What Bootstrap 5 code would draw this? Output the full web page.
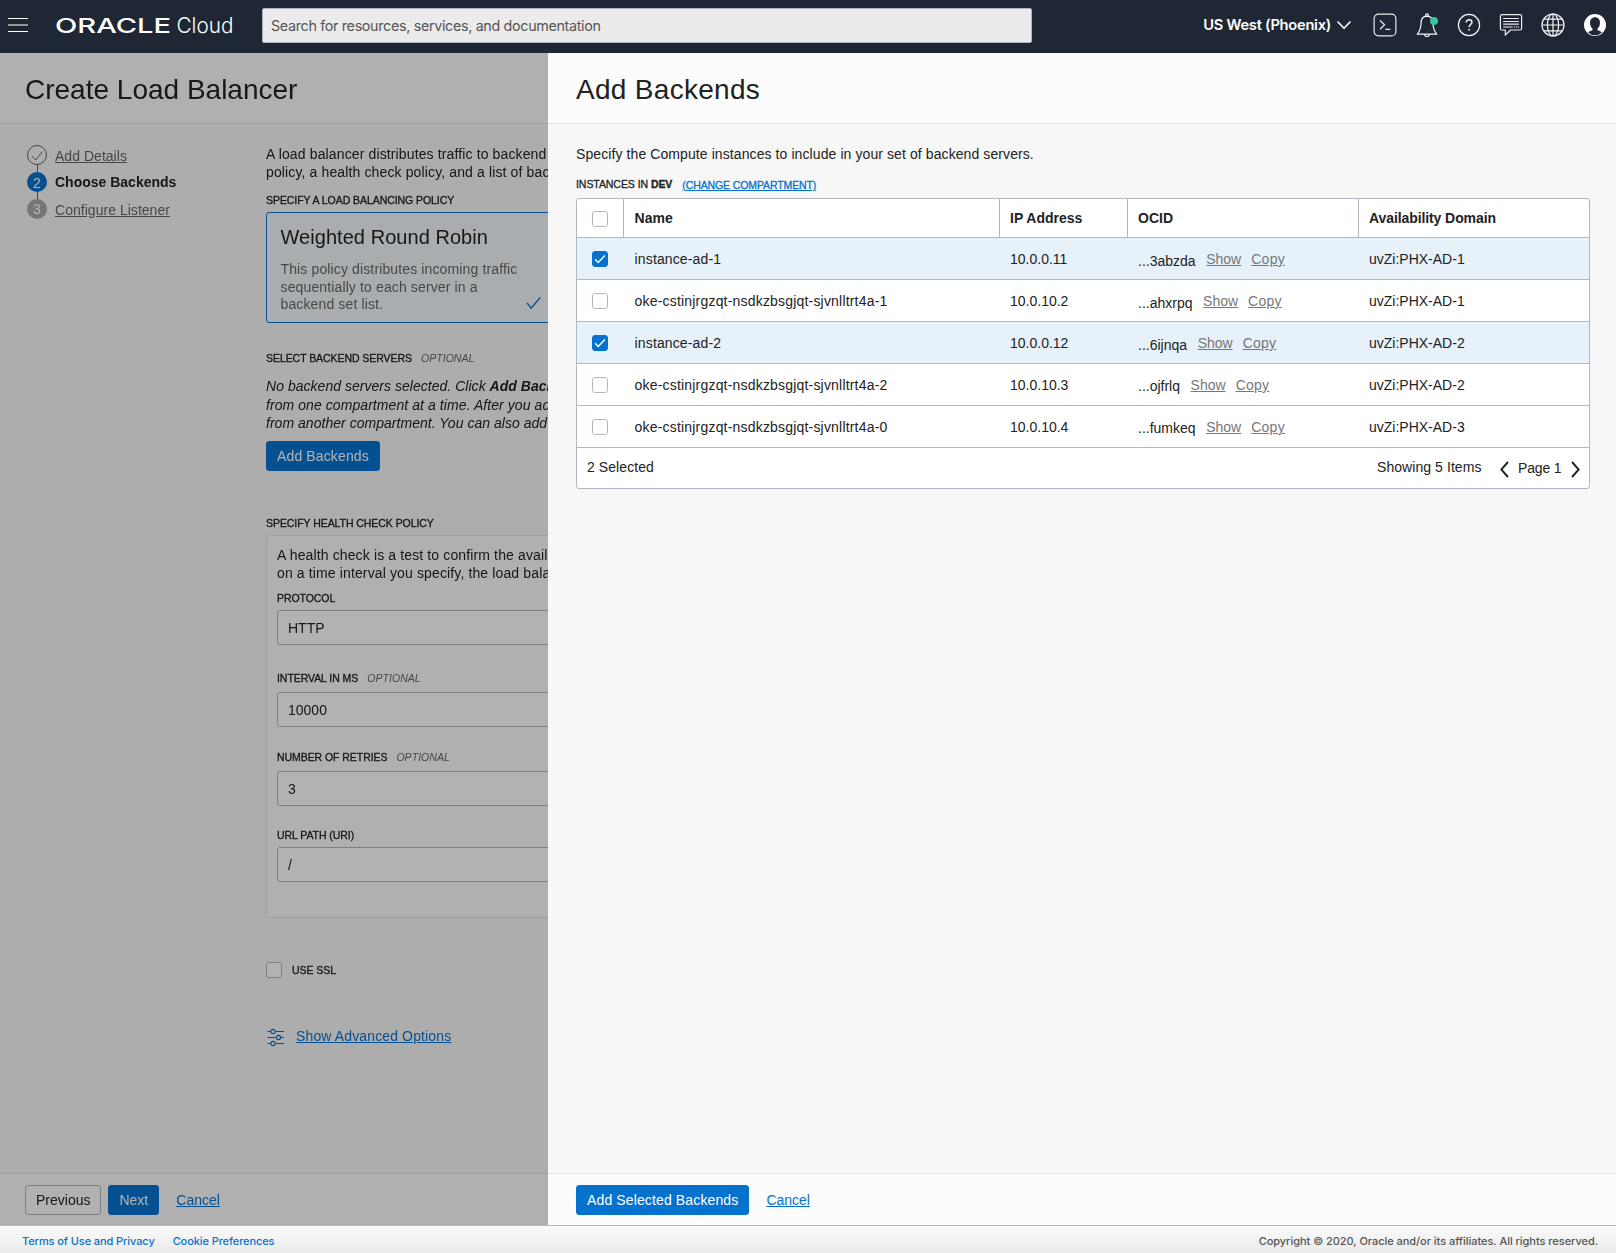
<!DOCTYPE html>
<html lang="en">
<head>
<meta charset="utf-8">
<meta name="viewport" content="width=device-width, initial-scale=1">
<title>Create Load Balancer</title>
<link href="https://cdn.jsdelivr.net/npm/bootstrap@5.3.0/dist/css/bootstrap.min.css" rel="stylesheet">
<script src="https://cdn.jsdelivr.net/npm/bootstrap@5.3.0/dist/js/bootstrap.bundle.min.js" defer></script>
<style>
:root{--blue:#0572ce;--ink:#222;--rule:#b1b8c0}
body{font-family:"Liberation Sans",Arial,sans-serif;font-size:14px;line-height:18px;color:var(--ink);width:1616px;height:1253px;overflow:hidden}
a{color:var(--blue)}
svg{display:block;flex:none}
.ui-font{font-family:Inter,"Liberation Sans",sans-serif}
.topbar{height:53px;background:#1e2733;color:#fff;padding:0 9px 3px 8px}
.burger{margin-right:28px}
.search-box{width:770px;height:35px;margin:1px 0 0 22px;padding:0 8px;border:1px solid #a9b6c4;border-radius:2px;background:#ebebeb;color:#555;font-size:14.3px;letter-spacing:-.32px;line-height:34px}
.region{font-size:14.7px;font-weight:600;line-height:20px;letter-spacing:-.27px;margin-right:6px}
.tools{gap:18px;margin-left:22px}
.stage{height:1172px}
.wizard{width:548px;background:#f7f7f7;filter:brightness(.7);overflow:hidden;white-space:nowrap}
.drawer{background:#f7f7f7}
.title-bar{height:71px;background:#fcfcfc;border-bottom:1px solid #e4e4e4;padding:17px 25px 0;flex:none}
.title-bar h1{font-size:28px;line-height:40px;margin:0;white-space:nowrap}
.action-bar{height:52px;background:#fcfcfc;border-top:1px solid #e4e4e4;padding:11px 25px 0;flex:none}
.drawer .title-bar,.drawer .action-bar{padding-left:28px}
.drawer h1{letter-spacing:.3px}
.act{display:inline-block;height:30px;border-radius:3px;padding:0 10px;font-size:14px;line-height:28px;border:1px solid var(--blue);background:var(--blue);color:#fff}
.act.plain{background:#fdfdfd;border-color:var(--rule);color:var(--ink)}
.after-act{margin:6px 0 0 17px}
.airy{letter-spacing:.13px}
.steps{width:266px;padding:18px 0 0 27px;flex:none}
.step{height:27px;gap:8px;line-height:27px}
.step a{color:#666;padding-top:1px;letter-spacing:.03px}
.form-col{flex:none;width:400px;padding-top:21px}
.cap-label{font-size:10.5px;line-height:16px;height:16px;letter-spacing:-.06px;-webkit-text-stroke:.3px currentColor}
.cap-label i{color:#666;-webkit-text-stroke:0;margin-left:9px;letter-spacing:.05px}
.policy{width:300px;height:111px;border:1px solid var(--blue);border-radius:3px;background:#f2f7fa;padding:12px 14px 0 13.5px;margin-top:4px}
.policy h2{font-size:20px;line-height:24px;font-weight:400;margin:0 0 12px;letter-spacing:.05px}
.policy p{width:245px;line-height:17.5px;color:#666;margin:0}
.loose{line-height:18.5px;margin:0}
.health{width:330px;height:383px;border:1px solid #e3e3e3;border-radius:3px;background:#fcfcfc;padding:10px}
.field{width:320px;height:35px;border:1px solid var(--rule);border-radius:3px;background:#fff;padding:0 10px;line-height:35px}
.tick{width:16px;height:16px;border:1px solid var(--rule);border-radius:3px;background:#fff;flex:none}
.tick.on{background:var(--blue);border-color:var(--blue)}
.gap-11{margin-top:11px}.gap-22{margin-top:22px}.gap-25{margin-top:25px}.gap-27{margin-top:27px}.gap-44{margin-top:44px}.gap-49{margin-top:49px}.gap-6{margin-top:6px}.gap-8{margin-top:8px}
.drawer-body{padding:21px 26px 0 28px;white-space:nowrap}
.grid-box{background:#fff;border:1px solid var(--rule);border-radius:3px;height:291px;margin-top:6px}
.line{display:grid;grid-template-columns:46px 376px 128px 231px 1fr;height:42px;border-bottom:1px solid var(--rule)}
.line>div{padding:12px 0 0 11px}
.line>div:first-child{padding:13px 0 0 15px}
.line>div:nth-child(2){padding-left:11.6px}
.line.heads{height:39px;font-weight:700}
.line.heads>div{padding:10px 0 0 10px}
.line.heads>div:nth-child(2){padding-left:10.6px}
.line.heads>div:first-child{padding:12px 0 0 15px}
.line.heads>div:last-child{letter-spacing:-.09px}
.line.heads>div+div{border-left:1px solid var(--rule)}
.line.picked{background:#e6f1fa}
.line a{color:#777;margin-left:10.6px}
.line a+a{letter-spacing:.25px;margin-left:10px}
.wide-name{letter-spacing:.19px}
.ocid{padding-top:2px}
.ocid.near{padding-top:1px}
.sum{padding:10px 9px 0 10px}
.legal{height:28px;border-top:1px solid #b4b5bf;background:linear-gradient(#fafafa,#ebebeb);font-size:11px;line-height:16px;font-weight:500;padding:7px 18px 0 22px;letter-spacing:-.09px}
.legal a{text-decoration:none;margin-right:18px}
.legal span{color:#555;letter-spacing:-.04px}
</style>
</head>
<body>
<header class="topbar d-flex align-items-center ui-font">
  <svg class="burger" width="20" height="20"><path d="M0 3.5h20M0 16.5h20" stroke="#fff"/><path d="M0 10h20" stroke="#8f959b" stroke-width="2"/></svg>
  <svg width="184" height="30" fill="#fff"><text x="-1" y="22.8" font-size="20.6" font-weight="500" textLength="116" lengthAdjust="spacingAndGlyphs">ORACLE</text><text x="120.5" y="22.8" font-weight="300" font-size="22" textLength="57" lengthAdjust="spacingAndGlyphs">Cloud</text></svg>
  <div class="search-box">Search for resources, services, and documentation</div>
  <span class="region ms-auto">US West (Phoenix)</span>
  <svg width="14" height="10" fill="none" stroke="#fff" stroke-width="1.6" stroke-linecap="round" stroke-linejoin="round"><path d="M1 2l6 6.3L13 2"/></svg>
  <div class="tools d-flex">
    <svg width="24" height="24" fill="none" stroke="#e9ecee" stroke-width="1.2"><rect x="1.1" y="1.1" width="21.8" height="21.8" rx="4.5"/><path d="M7 7.5l4.6 4.3L7 16.2M12.3 16.3h5"/></svg>
    <svg width="24" height="24" fill="none" stroke="#f4f5f6" stroke-width="1.2" stroke-linejoin="round"><path d="M12 3.2c-4 0-5.800 3.200-5.900 6.700-.1 5.500-1.300 8.100-3.900 11.300h19.600c-2.600-3.200-3.800-5.800-3.900-11.300C17.800 6.400 16 3.200 12 3.200z"/><circle cx="12" cy="2.300" r="1.400"/><path d="M9.500 21.300a2.500 2.200 0 0 0 5 0"/><circle cx="19" cy="8" r="4" fill="#38c5a3" stroke="none"/></svg>
    <svg width="24" height="24" fill="none" stroke="#f4f5f6" stroke-width="1.2"><circle cx="12" cy="12" r="10.600"/><path d="M9.200 9.600c0-1.800 1.200-2.900 2.900-2.900 1.600 0 2.800 1 2.800 2.500 0 2.300-2.800 2.400-2.800 5.100" stroke-width="1.500"/><path d="M12.100 15.900v1.700" stroke-width="1.700"/></svg>
    <svg width="24" height="24" fill="none" stroke="#e9ecee" stroke-width="1.200" stroke-linejoin="round"><path d="M3 1.600h18q1.600 0 1.600 1.500v12.400q0 1.500-1.600 1.500H11.600L6.300 22v-5H3q-1.600 0-1.600-1.500V3.100Q1.400 1.600 3 1.600z"/><path d="M4.200 5.500h15.600M4.200 8.500h15.600M4.200 11.200h15.600M4.200 14h9.500"/><path d="M15 14h5" stroke-dasharray="1.300 .7"/></svg>
    <svg width="24" height="24" fill="none" stroke="#f4f5f6" stroke-width="1.200"><circle cx="12" cy="12" r="11"/><ellipse cx="12" cy="12" rx="5.600" ry="11"/><path d="M12 1v22M1 12h22M3 6.200h18M3 17.800h18"/></svg>
    <svg width="24" height="24"><circle cx="12" cy="12" r="11" fill="#fff"/><path d="M12 4.300c3.200 0 5 2.400 5 5.500 0 2.500-1 4.700-2.500 5.800v1.600c2.200.6 3.700 1.400 4.500 2.300A10.200 10.200 0 0 1 5 19.500c.8-.9 2.300-1.700 4.500-2.300v-1.600C8 14.500 7 12.300 7 9.800c0-3.100 1.800-5.500 5-5.500z" fill="#1e2733"/></svg>
  </div>
</header>
<div class="stage d-flex">
  <main class="wizard d-flex flex-column">
    <div class="title-bar"><h1 class="fw-normal">Create Load Balancer</h1></div>
    <div class="d-flex flex-grow-1">
      <nav class="steps">
        <div class="step d-flex"><svg width="20" height="27" fill="none" stroke="#666"><circle cx="10" cy="13" r="9.500"/><path d="M5 14l3.600 4L15.500 9.500M10.500 23v4"/></svg><a href="#">Add Details</a></div>
        <div class="step d-flex"><svg width="20" height="27"><path d="M10.500 0v27" stroke="#666"/><circle cx="10" cy="13" r="10" fill="#0572ce"/><text x="10" y="18.500" font-size="14" fill="#fff" text-anchor="middle">2</text></svg><b>Choose Backends</b></div>
        <div class="step d-flex"><svg width="20" height="27"><path d="M10.500 0v5" stroke="#666"/><circle cx="10" cy="13" r="10" fill="#a9a9a9"/><text x="10" y="18" font-size="14" fill="#fff" text-anchor="middle">3</text></svg><a href="#">Configure Listener</a></div>
      </nav>
      <section class="form-col">
        <div class="airy">A load balancer distributes traffic to backend<br>policy, a health check policy, and a list of backends</div>
        <div class="cap-label gap-11">SPECIFY A LOAD BALANCING POLICY</div>
        <div class="policy">
          <h2>Weighted Round Robin</h2>
          <div class="d-flex align-items-end"><p class="airy">This policy distributes incoming traffic<br>sequentially to each server in a<br>backend set list.</p><svg width="15" height="17" fill="none" stroke="#0572ce" stroke-width="1.200"><path d="M1 6l4.200 5.200L14.200.5"/></svg></div>
        </div>
        <div class="cap-label gap-27">SELECT BACKEND SERVERS<i>OPTIONAL</i></div>
        <p class="loose fst-italic gap-11" style="letter-spacing:.03px">No backend servers selected. Click <b>Add Backends</b><br><span style="letter-spacing:.07px">from one compartment at a time. After you add</span><br>from another compartment. You can also add</p>
        <a class="act airy text-decoration-none" style="margin-top:8.5px" href="#">Add Backends</a>
        <div class="cap-label gap-44">SPECIFY HEALTH CHECK POLICY</div>
        <div class="health mt-1">
          <p class="airy mb-0">A health check is a test to confirm the availability<br>on a time interval you specify, the load balancer</p>
          <div class="cap-label gap-8">PROTOCOL</div>
          <div class="field mt-1">HTTP</div>
          <div class="cap-label gap-25">INTERVAL IN MS<i>OPTIONAL</i></div>
          <div class="field gap-6">10000</div>
          <div class="cap-label gap-22">NUMBER OF RETRIES<i>OPTIONAL</i></div>
          <div class="field gap-6">3</div>
          <div class="cap-label" style="margin-top:21px">URL PATH (URI)</div>
          <div class="field mt-1">/</div>
        </div>
        <div class="d-flex align-items-center gap-44"><span class="tick"></span><span class="cap-label" style="margin-left:10px">USE SSL</span></div>
        <div class="d-flex gap-49"><svg width="19" height="19" fill="none" stroke="#0572ce" stroke-width="1.100" style="margin:1px 11px 0 0"><path d="M1.500 3.500h3M9.500 3.500h8.500M1.500 9.500h8M14.500 9.500h3.500M1.500 15.500h3M9.500 15.500h8.500"/><circle cx="7" cy="3.500" r="2.100"/><circle cx="12.500" cy="9.500" r="2.100"/><circle cx="7" cy="15.500" r="2.100"/></svg><a class="airy" href="#">Show Advanced Options</a></div>
      </section>
    </div>
    <div class="action-bar d-flex"><a class="act plain text-decoration-none" href="#">Previous</a><a class="act text-decoration-none" style="margin-left:7px" href="#">Next</a><a class="after-act" href="#">Cancel</a></div>
  </main>
  <aside class="drawer flex-grow-1 d-flex flex-column">
    <div class="title-bar"><h1 class="fw-normal">Add Backends</h1></div>
    <div class="drawer-body flex-grow-1">
      <div style="letter-spacing:.09px">Specify the Compute instances to include in your set of backend servers.</div>
      <div class="cap-label d-flex" style="margin-top:13px"><span>INSTANCES IN <b>DEV</b></span><a href="#" style="margin:1px 0 0 10px;letter-spacing:-.11px">(CHANGE COMPARTMENT)</a></div>
      <div class="grid-box">
        <div class="line heads"><div><span class="tick d-block"></span></div><div>Name</div><div>IP Address</div><div>OCID</div><div>Availability Domain</div></div>
        <div class="line picked"><div><span class="tick on d-block"><svg width="14" height="14" fill="none" stroke="#fff" stroke-width="1.500"><path d="M2.200 7.300l3 3.200L11.900 3.600"/></svg></span></div><div class="airy">instance-ad-1</div><div>10.0.0.11</div><div class="d-flex"><span class="ocid">...3abzda</span><a href="#">Show</a><a href="#">Copy</a></div><div>uvZi:PHX-AD-1</div></div>
        <div class="line"><div><span class="tick d-block"></span></div><div class="wide-name">oke-cstinjrgzqt-nsdkzbsgjqt-sjvnlltrt4a-1</div><div>10.0.10.2</div><div class="d-flex"><span class="ocid">...ahxrpq</span><a href="#">Show</a><a href="#">Copy</a></div><div>uvZi:PHX-AD-1</div></div>
        <div class="line picked"><div><span class="tick on d-block"><svg width="14" height="14" fill="none" stroke="#fff" stroke-width="1.500"><path d="M2.200 7.300l3 3.200L11.900 3.600"/></svg></span></div><div class="airy">instance-ad-2</div><div>10.0.0.12</div><div class="d-flex"><span class="ocid">...6ijnqa</span><a href="#">Show</a><a href="#">Copy</a></div><div>uvZi:PHX-AD-2</div></div>
        <div class="line"><div><span class="tick d-block"></span></div><div class="wide-name">oke-cstinjrgzqt-nsdkzbsgjqt-sjvnlltrt4a-2</div><div>10.0.10.3</div><div class="d-flex"><span class="ocid near">...ojfrlq</span><a href="#">Show</a><a href="#">Copy</a></div><div>uvZi:PHX-AD-2</div></div>
        <div class="line"><div><span class="tick d-block"></span></div><div class="wide-name">oke-cstinjrgzqt-nsdkzbsgjqt-sjvnlltrt4a-0</div><div>10.0.10.4</div><div class="d-flex"><span class="ocid near">...fumkeq</span><a href="#">Show</a><a href="#">Copy</a></div><div>uvZi:PHX-AD-3</div></div>
        <div class="sum d-flex"><span style="letter-spacing:.08px">2 Selected</span><span class="ms-auto" style="letter-spacing:.07px">Showing 5 Items</span>
          <svg width="9" height="17" fill="none" stroke="#222" stroke-width="1.900" style="margin:3px 9.500px 0 18px"><path d="M8 1L1.300 8.500 8 16"/></svg><span style="padding-top:1px;letter-spacing:-.15px">Page 1</span><svg width="9" height="17" fill="none" stroke="#222" stroke-width="1.900" style="margin:3px 0 0 9.500px"><path d="M1 1l6.700 7.500L1 16"/></svg></div>
      </div>
    </div>
    <div class="action-bar d-flex"><a class="act airy text-decoration-none" href="#">Add Selected Backends</a><a class="after-act" href="#">Cancel</a></div>
  </aside>
</div>
<footer class="legal d-flex ui-font"><a href="#">Terms of Use and Privacy</a><a href="#">Cookie Preferences</a><span class="ms-auto">Copyright © 2020, Oracle and/or its affiliates. All rights reserved.</span></footer>
</body>
</html>
